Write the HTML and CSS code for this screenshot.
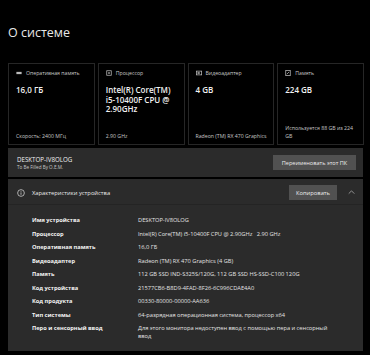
FILE: index.html
```html
<!DOCTYPE html>
<html lang="ru">
<head>
<meta charset="utf-8">
<link rel="stylesheet" href="styles.css">
</head>
<body>
<div class="page">
  <h1 class="title">О системе</h1>
  <div class="cards">
    <div class="card">
      <div class="card-head"><svg class="ico" viewBox="0 0 8 8"><rect x="0.5" y="2.5" width="7" height="3" fill="#bbb"/></svg><span>Оперативная память</span></div>
      <div class="card-value">16,0 ГБ</div>
      <div class="card-foot">Скорость: 2400 МГц</div>
    </div>
    <div class="card">
      <div class="card-head"><svg class="ico" viewBox="0 0 8 8"><rect x="1" y="1" width="6" height="6" fill="none" stroke="#bbb" stroke-width="1"/><rect x="3" y="3" width="2" height="2" fill="#bbb"/></svg><span>Процессор</span></div>
      <div class="card-value">Intel(R) Core(TM) i5-10400F CPU @ 2.90GHz</div>
      <div class="card-foot">2.90 GHz</div>
    </div>
    <div class="card">
      <div class="card-head"><svg class="ico" viewBox="0 0 8 8"><rect x="0.5" y="1.5" width="7" height="5" fill="none" stroke="#bbb" stroke-width="1"/><rect x="2" y="3" width="3" height="2" fill="#bbb"/></svg><span>Видеоадаптер</span></div>
      <div class="card-value">4 GB</div>
      <div class="card-foot">Radeon (TM) RX 470 Graphics</div>
    </div>
    <div class="card">
      <div class="card-head"><svg class="ico" viewBox="0 0 8 8"><rect x="1" y="0.5" width="6" height="7" fill="none" stroke="#bbb" stroke-width="1"/><path d="M2.5 5.5 L5.5 2.5" stroke="#bbb" stroke-width="1"/></svg><span>Память</span></div>
      <div class="card-value">224 GB</div>
      <div class="card-foot">Используется 88 GB из 224 GB</div>
    </div>
  </div>

  <div class="panel pc">
    <div class="pc-names">
      <div class="pc-name">DESKTOP-IV8OLOG</div>
      <div class="pc-sub">To Be Filled By O.E.M.</div>
    </div>
    <button class="btn btn-rename">Переименовать этот ПК</button>
  </div>

  <div class="panel specs">
    <div class="specs-head">
      <svg class="info" viewBox="0 0 10 10"><circle cx="5" cy="5" r="4.2" fill="none" stroke="#ddd" stroke-width="0.9"/><rect x="4.55" y="4.2" width="0.9" height="3" fill="#ddd"/><rect x="4.55" y="2.6" width="0.9" height="0.9" fill="#ddd"/></svg>
      <span class="specs-title">Характеристики устройства</span>
      <button class="btn btn-copy">Копировать</button>
      <svg class="chev" viewBox="0 0 10 6"><path d="M1 5 L5 1 L9 5" fill="none" stroke="#bbb" stroke-width="1"/></svg>
    </div>
    <div class="specs-body">
      <div class="row"><div class="lbl">Имя устройства</div><div class="val">DESKTOP-IV8OLOG</div></div>
      <div class="row"><div class="lbl">Процессор</div><div class="val">Intel(R) Core(TM) i5-10400F CPU @ 2.90GHz&nbsp;&nbsp;&nbsp;2.90 GHz</div></div>
      <div class="row"><div class="lbl">Оперативная память</div><div class="val">16,0 ГБ</div></div>
      <div class="row"><div class="lbl">Видеоадаптер</div><div class="val">Radeon (TM) RX 470 Graphics (4 GB)</div></div>
      <div class="row"><div class="lbl">Память</div><div class="val">112 GB SSD IND-S325S/120G, 112 GB SSD HS-SSD-C100 120G</div></div>
      <div class="row"><div class="lbl">Код устройства</div><div class="val">21577CB6-B8D9-4FAD-8F26-6C996CDAE4A0</div></div>
      <div class="row"><div class="lbl">Код продукта</div><div class="val">00330-80000-00000-AA636</div></div>
      <div class="row"><div class="lbl">Тип системы</div><div class="val">64-разрядная операционная система, процессор x64</div></div>
      <div class="row"><div class="lbl">Перо и сенсорный ввод</div><div class="val">Для этого монитора недоступен ввод с помощью пера и сенсорный ввод</div></div>
    </div>
  </div>
</div>
</body>
</html>
```

FILE: styles.css
```css
* { box-sizing: border-box; }
html, body { margin: 0; padding: 0; background: #000; }
body {
  font-family: "Open Sans", "Noto Sans", sans-serif;
  color: #fff;
  width: 370px;
  height: 355px;
  overflow: hidden;
}
.page { padding: 0 7px 0 8px; }
.title {
  margin: 0;
  padding-top: 24px;
  height: 63px;
  font-size: 12.5px;
  font-weight: 400;
  color: #e8e8e8;
  line-height: 17px;
}
.cards {
  display: grid;
  grid-template-columns: repeat(4, 1fr);
  gap: 3px;
  height: 82px;
  width: 356px;
}
.card {
  border: 1px solid #262626;
  background: #000;
  padding: 5px 6px 4px 7px;
  display: flex;
  flex-direction: column;
}
.card-head {
  display: flex;
  align-items: center;
  gap: 4px;
  font-size: 5.2px;
  color: #c8c8c8;
  height: 8px;
}
.ico { width: 6px; height: 6px; flex: none; }
.card-value {
  margin-top: 8px;
  font-size: 8px;
  font-weight: 600;
  line-height: 9.5px;
  color: #f2f2f2;
}
.card-foot {
  margin-top: auto;
  font-size: 5.2px;
  line-height: 8px;
  color: #c8c8c8;
}
.panel {
  background: #2b2b2b;
  width: 355px;
}
.pc {
  margin-top: 3px;
  height: 29px;
  display: flex;
  align-items: center;
  padding: 0 7px 0 9px;
}
.pc-names { flex: 1; }
.pc-name { font-size: 6.2px; line-height: 8px; color: #f0f0f0; }
.pc-sub { font-size: 4.6px; line-height: 6px; color: #c8c8c8; }
.btn {
  border: none;
  font-family: inherit;
  color: #ececec;
  background: #515151;
  padding: 0;
}
.btn-rename { width: 83px; height: 15px; font-size: 5.6px; }
.specs { margin-top: 2px; height: 172px; }
.specs-head {
  height: 26px;
  display: flex;
  align-items: center;
  padding: 2px 7px 0 9px;
  border-bottom: 1px solid #242424;
}
.info { width: 8px; height: 8px; flex: none; }
.specs-title { flex: 1; font-size: 5.8px; color: #eaeaea; margin-left: 7px; }
.btn-copy { width: 48px; height: 15px; font-size: 5.8px; }
.chev { width: 7px; height: 4.5px; margin-left: 11px; margin-right: 1px; }
.specs-body { padding: 12px 0 0 24px; }
.row {
  display: flex;
  min-height: 13.5px;
  font-size: 5.7px;
  line-height: 7.5px;
}
.lbl { width: 106px; flex: none; font-weight: 700; color: #f4f4f4; }
.val { width: 200px; color: #e4e4e4; }
```
